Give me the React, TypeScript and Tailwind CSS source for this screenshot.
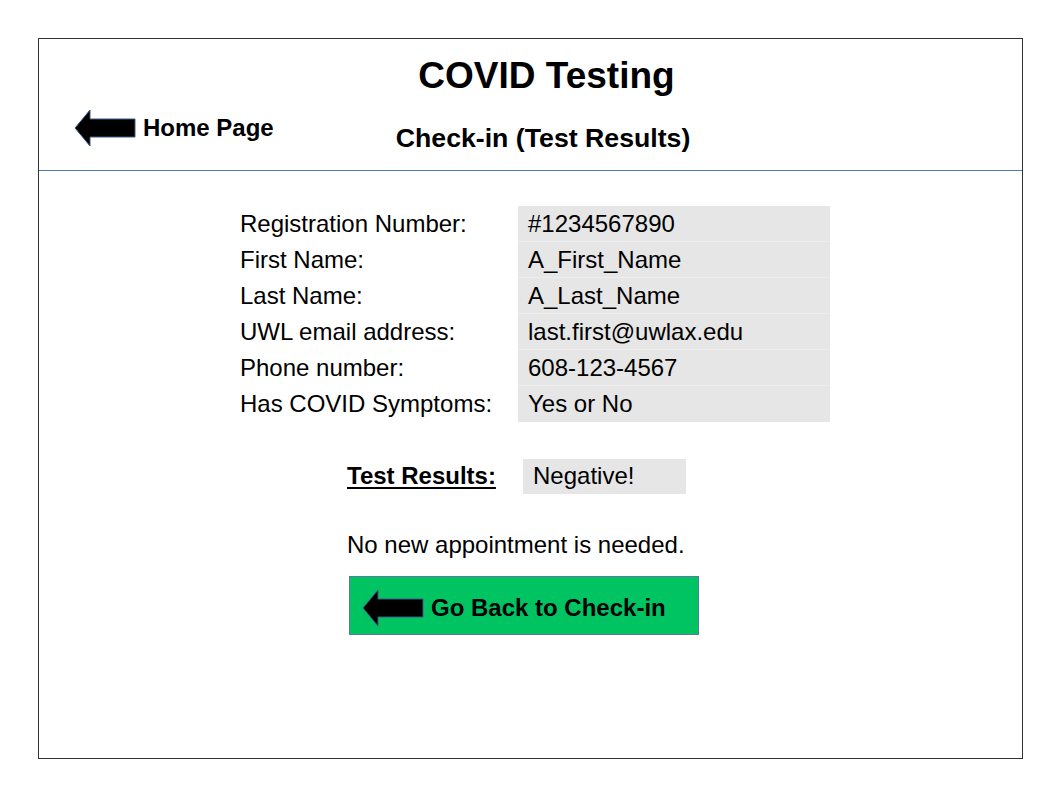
const ArrowLeft = ({ className }: { className?: string }) => (
  <svg viewBox="0 0 62 38" className={className}>
    <path
      d="M1 19 L16 1 L16 10 L61 10 L61 28 L16 28 L16 37 Z"
      fill="#000"
      stroke="#3a5a8a"
      strokeWidth="1"
    />
  </svg>
)

const rows = [
  { label: 'Registration Number:', value: '#1234567890' },
  { label: 'First Name:', value: 'A_First_Name' },
  { label: 'Last Name:', value: 'A_Last_Name' },
  { label: 'UWL email address:', value: 'last.first@uwlax.edu' },
  { label: 'Phone number:', value: '608-123-4567' },
  { label: 'Has COVID Symptoms:', value: 'Yes or No' },
]

export default function App() {
  return (
    <div
      className="w-[1058px] h-[794px] bg-white text-black pt-[38px] pl-[38px]"
      style={{ fontFamily: '"Liberation Sans", Arial, sans-serif' }}
    >
      <div className="w-[985px] h-[721px] border border-[#333] flex flex-col">
        {/* Header */}
        <header className="h-[132px] border-b border-[#4a7ebb] flex flex-col">
          <h1 className="text-[37px] font-bold text-center leading-none pt-[18px] pl-[32px]">
            COVID Testing
          </h1>
          <div className="flex items-start mt-[13px]">
            <div className="flex items-center ml-[35px] mt-[2px]">
              <ArrowLeft className="w-[62px] h-[38px]" />
              <span className="text-[24px] font-bold ml-[7px]">Home Page</span>
            </div>
            <h2 className="text-[26.7px] font-bold ml-[122px] mt-[11px]">Check-in (Test Results)</h2>
          </div>
        </header>

        {/* Patient details */}
        <div className="flex mt-[35px] ml-[201px] text-[24px]">
          <div className="flex flex-col w-[278px]">
            {rows.map((r) => (
              <div key={r.label} className="h-[36px] flex items-center">
                {r.label}
              </div>
            ))}
          </div>
          <div className="flex flex-col w-[312px] bg-[#e6e6e6]">
            {rows.map((r, i) => (
              <div
                key={r.label}
                className={`h-[36px] flex items-center pl-[10px] ${i < rows.length - 1 ? 'border-b border-[#ededed]' : ''}`}
              >
                {r.value}
              </div>
            ))}
          </div>
        </div>

        {/* Results */}
        <div className="flex items-center mt-[36px] ml-[308px] text-[24px]">
          <span className="font-bold underline underline-offset-[3px] decoration-2 w-[176px]">Test Results:</span>
          <div className="w-[163px] h-[35px] bg-[#e6e6e6] flex items-center pl-[10px]">Negative!</div>
        </div>

        <p className="text-[24px] ml-[308px] mt-[33px]">No new appointment is needed.</p>

        <button className="ml-[310px] mt-[13px] w-[350px] h-[59px] bg-[#00c462] border border-[#5a78a8] flex items-center pl-[12px] pt-[4px]">
          <ArrowLeft className="w-[62px] h-[38px]" />
          <span className="text-[24px] font-bold ml-[7px]">Go Back to Check-in</span>
        </button>
      </div>
    </div>
  )
}
